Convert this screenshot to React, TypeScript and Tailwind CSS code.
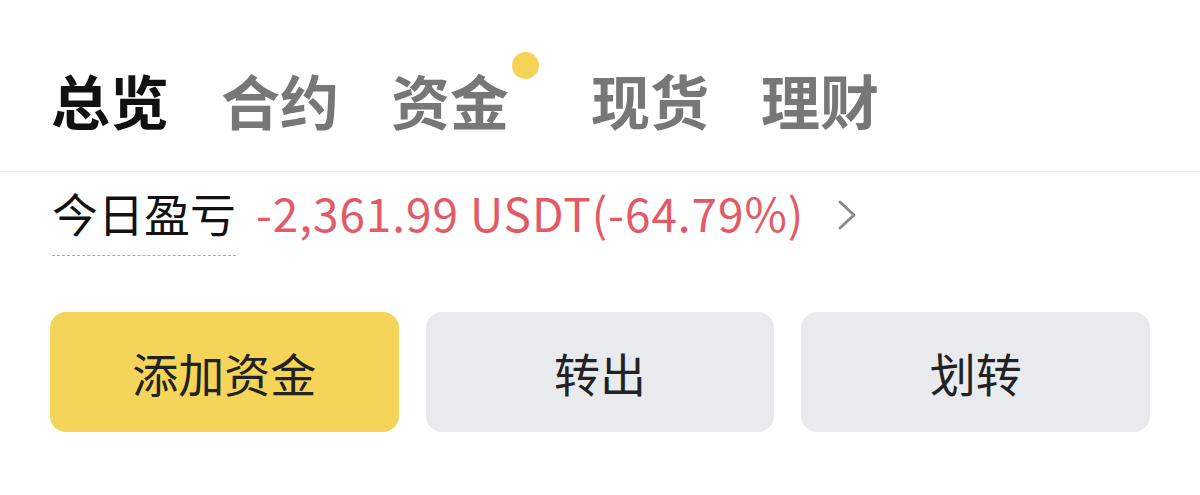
const tabs = ["总览", "合约", "资金", "现货", "理财"];

const buttons = [
  { label: "添加资金", primary: true },
  { label: "转出", primary: false },
  { label: "划转", primary: false },
];

export default function App() {
  return (
    <div
      className="w-[1200px] h-[495px] bg-white overflow-hidden"
      style={{ fontFamily: '"Noto Sans CJK SC", "Noto Sans", sans-serif' }}
    >
      {/* Tabs */}
      <div className="h-[172px] pt-[28px] pl-[51px] flex items-center gap-[52px] border-b border-[#e9e9e9]">
        {tabs.map((t, i) => (
          <div
            key={t}
            className={`relative text-[59px] leading-none font-bold ${i === 0 ? "text-[#111]" : "text-[#777]"} ${t === "资金" ? "mr-[30px]" : ""}`}
          >
            {t}
            {t === "资金" && (
              <span className="absolute -right-[30px] -top-[18px] w-[27px] h-[27px] rounded-full bg-[#f5d356]" />
            )}
          </div>
        ))}
      </div>

      {/* Today PnL */}
      <div className="pl-[52px] pt-[12px] flex items-start">
        <div className="text-[46px] leading-[56px] text-[#111] border-b border-dashed border-[#aaa] pb-[15px]">
          今日盈亏
        </div>
        <div className="ml-[20px] text-[46px] leading-[56px] tracking-[0.9px] text-[#e35a67]">
          -2,361.99 USDT(-64.79%)
        </div>
        <svg className="ml-[31px] mt-[15px]" width="24" height="32" viewBox="0 0 24 32" fill="none">
          <polyline points="5,3 19,16 5,29" stroke="#8a8a8a" strokeWidth="3" strokeLinecap="round" strokeLinejoin="round" />
        </svg>
      </div>

      {/* Actions */}
      <div className="mt-[56px] px-[50px] grid grid-cols-3 gap-[27px]">
        {buttons.map((b) => (
          <button
            key={b.label}
            className={`h-[120px] rounded-[16px] text-[46px] text-[#222] ${b.primary ? "bg-[#f5d45a]" : "bg-[#e9eaee]"}`}
          >
            {b.label}
          </button>
        ))}
      </div>
    </div>
  );
}
